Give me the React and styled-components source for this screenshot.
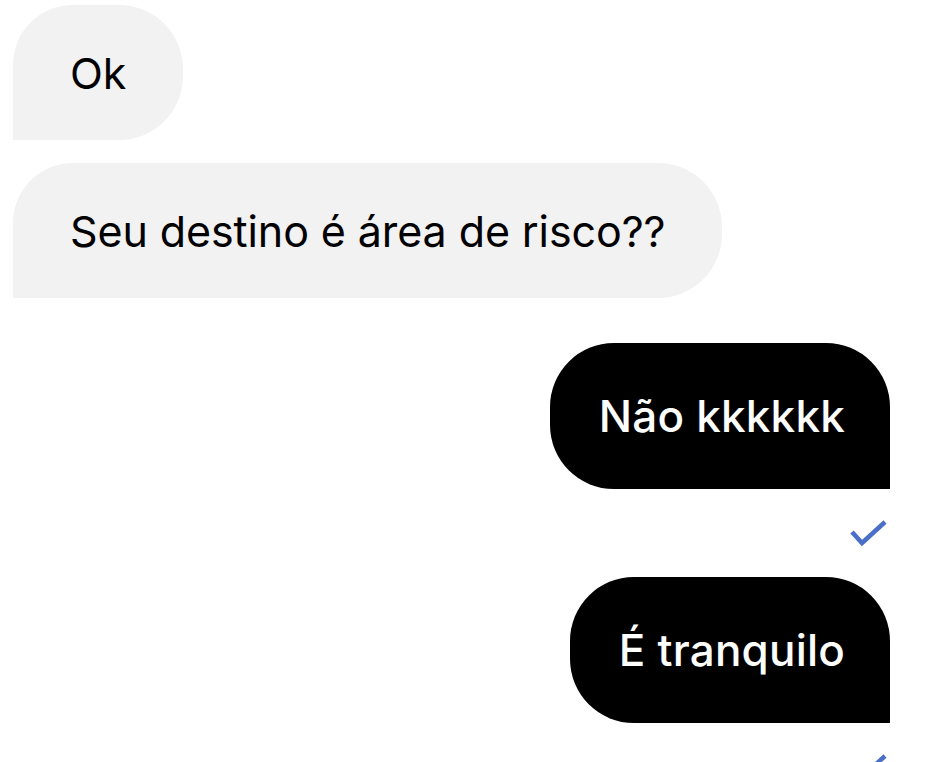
import React from 'react';
import styled, { createGlobalStyle } from 'styled-components';

const GlobalStyle = createGlobalStyle`
  html, body {
    margin: 0;
    padding: 0;
    background: #ffffff;
  }
  body {
    font-family: Inter, "Noto Sans", sans-serif;
  }
`;

const Thread = styled.div`
  width: 934px;
  height: 762px;
  overflow: hidden;
  box-sizing: border-box;
  padding: 5px 44px 0 13px;
  display: flex;
  flex-direction: column;
`;

const Row = styled.div`
  display: flex;
  justify-content: ${(p) => (p.mine ? 'flex-end' : 'flex-start')};
  margin-top: ${(p) => p.gap || 0}px;
`;

const Bubble = styled.div`
  box-sizing: border-box;
  display: flex;
  align-items: center;
  height: ${(p) => (p.mine ? 146 : 135)}px;
  padding: ${(p) => (p.mine ? '0 45px 0 49px' : '0 57px')};
  background: ${(p) => (p.mine ? '#000000' : '#f2f2f2')};
  color: ${(p) => (p.mine ? '#ffffff' : '#000000')};
  border-radius: ${(p) => (p.mine ? '64px 64px 0 64px' : '60px 64px 64px 0')};
  font-size: ${(p) => (p.mine ? 44 : 43)}px;
  font-weight: ${(p) => (p.mine ? 500 : 400)};
  letter-spacing: ${(p) => (p.mine ? '0.2px' : '-0.1px')};
  white-space: nowrap;
`;

const Status = styled.div`
  display: flex;
  justify-content: flex-end;
  padding: 30px 2px 30px 0;
  height: 28px;
`;

const Check = () => (
  <svg width="38" height="28" viewBox="0 0 38 28">
    <path d="M2 13 L12 24 L35 3" fill="none" stroke="#4a6fc8" strokeWidth="4.5" />
  </svg>
);

const messages = [
  { text: 'Ok', gap: 0 },
  { text: 'Seu destino é área de risco??', gap: 23 },
  { text: 'Não kkkkkk', mine: true, gap: 45 },
  { text: 'É tranquilo', mine: true },
];

export default function App() {
  return (
    <Thread>
      <GlobalStyle />
      {messages.map((m, i) => (
        <React.Fragment key={i}>
          <Row mine={m.mine} gap={m.gap}>
            <Bubble mine={m.mine}>{m.text}</Bubble>
          </Row>
          {m.mine && (
            <Status>
              <Check />
            </Status>
          )}
        </React.Fragment>
      ))}
    </Thread>
  );
}
